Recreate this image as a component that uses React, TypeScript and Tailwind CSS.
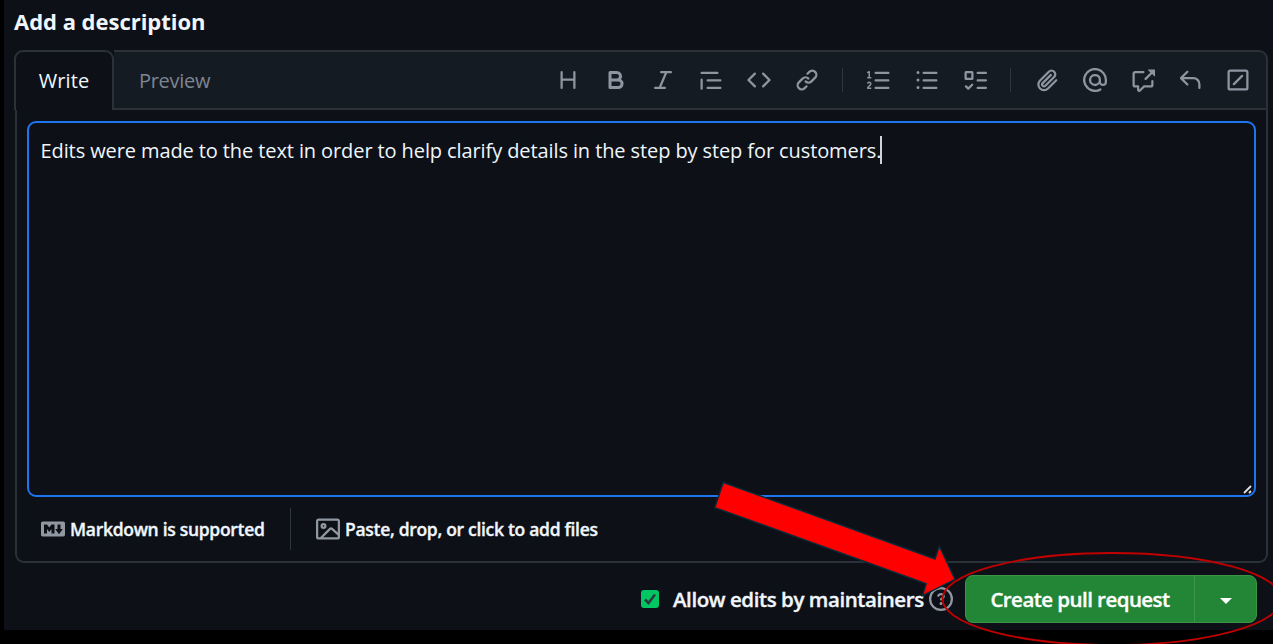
import React from "react";

const ICONS = {
  heading:
    "M3.75 2a.75.75 0 0 1 .75.75V7h7V2.75a.75.75 0 0 1 1.5 0v10.5a.75.75 0 0 1-1.5 0V8.5h-7v4.75a.75.75 0 0 1-1.5 0V2.75A.75.75 0 0 1 3.75 2Z",
  bold: "M4 2h4.5a3.501 3.501 0 0 1 2.852 5.53A3.499 3.499 0 0 1 9.5 14H4a1 1 0 0 1-1-1V3a1 1 0 0 1 1-1Zm1 7v3h4.5a1.5 1.5 0 0 0 0-3Zm3.5-2a1.5 1.5 0 0 0 0-3H5v3Z",
  italic:
    "M6 2.75A.75.75 0 0 1 6.75 2h6.5a.75.75 0 0 1 0 1.5h-2.505l-3.858 9H9.25a.75.75 0 0 1 0 1.5h-6.5a.75.75 0 0 1 0-1.5h2.505l3.858-9H6.75A.75.75 0 0 1 6 2.75Z",
  quote:
    "M1.75 2.5h10.5a.75.75 0 0 1 0 1.5H1.75a.75.75 0 0 1 0-1.5Zm4 5h8.5a.75.75 0 0 1 0 1.5h-8.5a.75.75 0 0 1 0-1.5Zm0 5h8.5a.75.75 0 0 1 0 1.5h-8.5a.75.75 0 0 1 0-1.5ZM2.5 7.75v6a.75.75 0 0 1-1.5 0v-6a.75.75 0 0 1 1.5 0Z",
  code: "m11.28 3.22 4.25 4.25a.75.75 0 0 1 0 1.06l-4.25 4.25a.749.749 0 0 1-1.275-.326.749.749 0 0 1 .215-.734L13.94 8l-3.72-3.72a.749.749 0 0 1 .326-1.275.749.749 0 0 1 .734.215Zm-6.56 0a.751.751 0 0 1 1.042.018.751.751 0 0 1 .018 1.042L2.06 8l3.72 3.72a.749.749 0 0 1-.326 1.275.749.749 0 0 1-.734-.215L.47 8.53a.75.75 0 0 1 0-1.06Z",
  link: "m7.775 3.275 1.25-1.25a3.5 3.5 0 1 1 4.95 4.95l-2.5 2.5a3.5 3.5 0 0 1-4.95 0 .751.751 0 0 1 .018-1.042.751.751 0 0 1 1.042-.018 1.998 1.998 0 0 0 2.83 0l2.5-2.5a2.002 2.002 0 0 0-2.83-2.83l-1.25 1.25a.751.751 0 0 1-1.042-.018.751.751 0 0 1-.018-1.042Zm-4.69 9.64a1.998 1.998 0 0 0 2.83 0l1.25-1.25a.751.751 0 0 1 1.042.018.751.751 0 0 1 .018 1.042l-1.25 1.25a3.5 3.5 0 1 1-4.95-4.95l2.5-2.5a3.5 3.5 0 0 1 4.95 0 .751.751 0 0 1-.018 1.042.751.751 0 0 1-1.042.018 1.998 1.998 0 0 0-2.83 0l-2.5 2.5a1.998 1.998 0 0 0 0 2.83Z",
  listOrdered:
    "M5 3.25a.75.75 0 0 1 .75-.75h8.5a.75.75 0 0 1 0 1.5h-8.5A.75.75 0 0 1 5 3.25Zm0 5a.75.75 0 0 1 .75-.75h8.5a.75.75 0 0 1 0 1.5h-8.5A.75.75 0 0 1 5 8.25Zm0 5a.75.75 0 0 1 .75-.75h8.5a.75.75 0 0 1 0 1.5h-8.5a.75.75 0 0 1-.75-.75ZM.924 10.32a.5.5 0 0 1-.851-.525l.001-.001.001-.002.002-.004.007-.011c.097-.144.215-.273.348-.384.228-.19.588-.392 1.068-.392.468 0 .858.181 1.126.484.259.294.377.673.377 1.038 0 .987-.686 1.495-1.156 1.845l-.047.035c-.303.225-.522.4-.654.597h1.357a.5.5 0 0 1 0 1H.5a.5.5 0 0 1-.5-.5c0-1.005.692-1.52 1.167-1.875l.035-.025c.531-.396.8-.625.8-1.078a.57.57 0 0 0-.128-.376C1.806 10.068 1.695 10 1.5 10a.658.658 0 0 0-.429.163.835.835 0 0 0-.144.153ZM2.003 2.5V6h.503a.5.5 0 0 1 0 1H.5a.5.5 0 0 1 0-1h.503V3.308l-.28.14a.5.5 0 0 1-.446-.895l1.003-.5a.5.5 0 0 1 .723.447Z",
  listUnordered:
    "M5.75 2.5h8.5a.75.75 0 0 1 0 1.5h-8.5a.75.75 0 0 1 0-1.5Zm0 5h8.5a.75.75 0 0 1 0 1.5h-8.5a.75.75 0 0 1 0-1.5Zm0 5h8.5a.75.75 0 0 1 0 1.5h-8.5a.75.75 0 0 1 0-1.5ZM2 14a1 1 0 1 1 0-2 1 1 0 0 1 0 2Zm1-6a1 1 0 1 1-2 0 1 1 0 0 1 2 0ZM2 4a1 1 0 1 1 0-2 1 1 0 0 1 0 2Z",
  tasklist:
    "M2 2h4a1 1 0 0 1 1 1v4a1 1 0 0 1-1 1H2a1 1 0 0 1-1-1V3a1 1 0 0 1 1-1Zm4.655 8.595a.75.75 0 0 1 0 1.06L4.03 14.28a.75.75 0 0 1-1.06 0l-1.5-1.5a.749.749 0 0 1 .326-1.275.749.749 0 0 1 .734.215l.97.97 2.095-2.095a.75.75 0 0 1 1.06 0ZM9.75 2.5h5.5a.75.75 0 0 1 0 1.5h-5.5a.75.75 0 0 1 0-1.5Zm0 5h5.5a.75.75 0 0 1 0 1.5h-5.5a.75.75 0 0 1 0-1.5Zm0 5h5.5a.75.75 0 0 1 0 1.5h-5.5a.75.75 0 0 1 0-1.5Zm-7.25-9v3h3v-3Z",
  paperclip:
    "M12.212 3.02a1.753 1.753 0 0 0-2.478.003l-5.83 5.83a3.007 3.007 0 0 0-.88 2.127c0 .795.315 1.551.88 2.116.567.567 1.333.89 2.126.89.79 0 1.548-.321 2.116-.89l5.48-5.48a.75.75 0 0 1 1.061 1.06l-5.48 5.48a4.492 4.492 0 0 1-3.177 1.33c-1.2 0-2.345-.487-3.187-1.33a4.483 4.483 0 0 1-1.32-3.177c0-1.195.475-2.341 1.32-3.186l5.83-5.83a3.25 3.25 0 0 1 5.553 2.297c0 .863-.343 1.691-.953 2.301L7.439 12.39c-.375.377-.884.59-1.416.593a1.998 1.998 0 0 1-1.412-.593 1.992 1.992 0 0 1 0-2.828l5.48-5.48a.751.751 0 0 1 1.042.018.751.751 0 0 1 .018 1.042l-5.48 5.48a.492.492 0 0 0 0 .707.499.499 0 0 0 .352.154.51.51 0 0 0 .356-.154l5.833-5.827a1.755 1.755 0 0 0 0-2.481Z",
  mention:
    "M4.75 2.37a6.501 6.501 0 0 0 6.5 11.26.75.75 0 0 1 .75 1.298A7.999 7.999 0 0 1 .989 4.148 8 8 0 0 1 16 7.75v1.5a2.75 2.75 0 0 1-5.072 1.475 3.999 3.999 0 0 1-6.65-4.19A4 4 0 0 1 12 8v1.25a1.25 1.25 0 0 0 2.5 0V7.867a6.5 6.5 0 0 0-9.75-5.496ZM10.5 8a2.5 2.5 0 1 0-5 0 2.5 2.5 0 0 0 5 0Z",
  crossReference:
    "M2.75 3.5a.25.25 0 0 0-.25.25v7.5c0 .138.112.25.25.25h2a.75.75 0 0 1 .75.75v2.19l2.72-2.72a.749.749 0 0 1 .53-.22h4.5a.25.25 0 0 0 .25-.25v-2.5a.75.75 0 0 1 1.5 0v2.5A1.75 1.75 0 0 1 13.25 13H9.06l-2.573 2.573A1.458 1.458 0 0 1 4 14.543V13H2.75A1.75 1.75 0 0 1 1 11.25v-7.5C1 2.784 1.784 2 2.75 2h5.5a.75.75 0 0 1 0 1.5ZM16 1.25v4.146a.25.25 0 0 1-.427.177L14.03 4.03l-3.75 3.75a.749.749 0 0 1-1.275-.326.749.749 0 0 1 .215-.734l3.75-3.75-1.543-1.543A.25.25 0 0 1 11.604 1h4.146a.25.25 0 0 1 .25.25Z",
  reply:
    "M6.78 1.97a.75.75 0 0 1 0 1.06L3.81 6h6.44A4.75 4.75 0 0 1 15 10.75v2.5a.75.75 0 0 1-1.5 0v-2.5a3.25 3.25 0 0 0-3.25-3.25H3.81l2.97 2.97a.749.749 0 0 1-.326 1.275.749.749 0 0 1-.734-.215L1.47 7.28a.75.75 0 0 1 0-1.06l4.25-4.25a.75.75 0 0 1 1.06 0Z",
  slash:
    "M13.25 1c.966 0 1.75.784 1.75 1.75v10.5A1.75 1.75 0 0 1 13.25 15H2.75A1.75 1.75 0 0 1 1 13.25V2.75C1 1.784 1.784 1 2.75 1ZM2.75 2.5a.25.25 0 0 0-.25.25v10.5c0 .138.112.25.25.25h10.5a.25.25 0 0 0 .25-.25V2.75a.25.25 0 0 0-.25-.25Zm8.53 3.28-5.5 5.5a.749.749 0 0 1-1.275-.326.749.749 0 0 1 .215-.734l5.5-5.5a.751.751 0 0 1 1.042.018.751.751 0 0 1 .018 1.042Z",
  markdown:
    "M14.85 3c.63 0 1.15.52 1.14 1.15v7.7c0 .63-.51 1.15-1.15 1.15H1.15C.52 13 0 12.48 0 11.84V4.15C0 3.52.52 3 1.15 3ZM9 11V5H7L5.5 7 4 5H2v6h2V8l1.5 1.92L7 8v3Zm2.99.5L14.5 8H13V5h-2v3H9.5Z",
  image:
    "M16 13.25A1.75 1.75 0 0 1 14.25 15H1.75A1.75 1.75 0 0 1 0 13.25V2.75C0 1.784.784 1 1.75 1h12.5c.966 0 1.75.784 1.75 1.75ZM1.75 2.5a.25.25 0 0 0-.25.25v10.5c0 .138.112.25.25.25h.94l.03-.03 6.077-6.078a1.75 1.75 0 0 1 2.412-.06L14.5 10.31V2.75a.25.25 0 0 0-.25-.25Zm12.5 11a.25.25 0 0 0 .25-.25v-.917l-4.298-3.889a.25.25 0 0 0-.344.009L4.81 13.5ZM7 6a2 2 0 1 1-3.999.001A2 2 0 0 1 7 6ZM5.5 6a.5.5 0 1 0-1 0 .5.5 0 0 0 1 0Z",
  question:
    "M0 8a8 8 0 1 1 16 0A8 8 0 0 1 0 8Zm8-6.5a6.5 6.5 0 1 0 0 13 6.5 6.5 0 0 0 0-13ZM6.92 6.085h.001a.749.749 0 1 1-1.342-.67c.169-.339.436-.701.849-.977C6.845 4.16 7.369 4 8 4a2.756 2.756 0 0 1 1.637.525c.503.377.863.965.863 1.725 0 .448-.115.83-.329 1.15-.205.307-.47.513-.692.662-.109.072-.22.138-.313.195l-.006.004a6.24 6.24 0 0 0-.26.16.952.952 0 0 0-.276.245.75.75 0 0 1-1.248-.832c.184-.264.42-.489.692-.661.103-.067.207-.132.313-.195l.007-.004c.1-.061.182-.11.258-.161a.969.969 0 0 0 .277-.245C8.96 6.514 9 6.427 9 6.25a.612.612 0 0 0-.262-.525A1.27 1.27 0 0 0 8 5.5c-.369 0-.595.09-.74.187a1.01 1.01 0 0 0-.34.398ZM9 11a1 1 0 1 1-2 0 1 1 0 0 1 2 0Z",
};

type IconName = keyof typeof ICONS;

function Icon({ name, className = "size-6" }: { name: IconName; className?: string }) {
  return (
    <svg viewBox="0 0 16 16" fill="currentColor" className={`shrink-0 ${className}`} aria-hidden="true">
      <path d={ICONS[name]} />
    </svg>
  );
}

const GROUPS: IconName[][] = [
  ["heading", "bold", "italic", "quote", "code", "link"],
  ["listOrdered", "listUnordered", "tasklist"],
  ["paperclip", "mention", "crossReference", "reply", "slash"],
];

function Toolbar() {
  return (
    <div className="flex h-full items-center pr-[4px] text-[#8d96a0]">
      {GROUPS.map((group, i) => (
        <React.Fragment key={i}>
          {i > 0 && (
            <div className="flex w-[24.5px] justify-center">
              <div className="h-6 w-px bg-[#30363d]" />
            </div>
          )}
          {group.map((name) => (
            <button key={name} className="flex h-10 w-[47.8px] items-center justify-center">
              <Icon name={name} />
            </button>
          ))}
        </React.Fragment>
      ))}
    </div>
  );
}

function Annotations() {
  return (
    <svg
      className="pointer-events-none absolute inset-0 h-[644px] w-[1273px]"
      viewBox="0 0 1273 644"
      aria-hidden="true"
    >
      <path
        d="M723.3 482.5 935 559 939.3 546.3 955 579.5 922.5 595.6 926.2 583.8 714.8 507.6Z"
        fill="#ff0000"
        stroke="#0b2a38"
        strokeWidth="1.4"
      />
      <ellipse cx="1112" cy="599" rx="169.5" ry="46" fill="none" stroke="#c00000" strokeWidth="1.8" />
    </svg>
  );
}

export default function App() {
  return (
    <div className="relative h-[644px] w-[1273px] overflow-hidden bg-black pl-1 font-['Open_Sans','Noto_Sans',sans-serif] text-[#f0f6fc]">
      <main className="flex h-[630px] flex-col bg-[#0d1117] pl-[10px] pr-[5px]">
        <h2 className="h-[50px] pt-[6px] text-[22px] leading-[30px] font-bold tracking-[-0.02px] whitespace-nowrap">
          Add a description
        </h2>

        <section className="flex h-[513px] flex-col">
          <div className="flex h-[60px] shrink-0">
            <button className="h-[60px] w-[100px] shrink-0 rounded-t-[9px] border-2 border-b-0 border-[#2b3138] text-[20px] tracking-[0.1px]">
              Write
            </button>
            <div className="-ml-[9px] flex h-[60px] grow items-center justify-between rounded-tr-[9px] border-y-2 border-r-2 border-[#2b3138] bg-[#151b23] [clip-path:polygon(9px_0,100%_0,100%_100%,9px_100%)]">
              <button className="pt-[2px] pl-[34px] text-[20px] tracking-[-0.3px] text-[#7d8590]">Preview</button>
              <Toolbar />
            </div>
          </div>

          <div className="ml-px flex grow flex-col rounded-b-[9px] border-x-2 border-b-2 border-[#2b3138] px-[10px] pt-[11px]">
            <div className="relative h-[376px] rounded-[9px] border-2 border-[#1f74f0] pt-[13px] pl-[11.5px]">
              <p className="flex h-7 items-center text-[20px] tracking-[-0.1px] whitespace-nowrap">
                <span className="pt-px">
                  Edits were made to the text in order to help clarify details in the step by step for customers.
                </span>
                <span className="-ml-px h-7 w-[1.5px] bg-[#d0d4d8]" />
              </p>
              <svg className="absolute right-0 bottom-0 size-[12px]" viewBox="0 0 12 12" aria-hidden="true">
                <path d="M2 10 9 3M7 10l2-2" stroke="#e0e0e0" strokeWidth="1.8" />
              </svg>
            </div>
            <div className="flex grow items-center pl-[14px] text-[17.5px] font-semibold tracking-[-0.3px] whitespace-nowrap [-webkit-text-stroke:0.35px]">
              <Icon name="markdown" className="size-6 text-[#9198a1]" />
              <span className="ml-[5px] w-[220px]">Markdown is supported</span>
              <span className="h-[42px] w-px bg-[#30363d]" />
              <Icon name="image" className="ml-[25px] size-6 text-[#9198a1]" />
              <span className="ml-[5px]">Paste, drop, or click to add files</span>
            </div>
          </div>
        </section>

        <div className="mt-[12px] flex h-[48px] items-center justify-end pr-[11px]">
          <span className="flex size-[18px] items-center justify-center rounded-[3px] bg-[#00c764]">
            <svg viewBox="0 0 18 18" className="size-[18px]" fill="none" aria-hidden="true">
              <path d="m4 9.5 3.5 3.5L14 4.5" stroke="#2e3b3a" strokeWidth="2.6" />
            </svg>
          </span>
          <span className="ml-[14px] w-[256px] pt-px text-[20.5px] font-semibold tracking-[-0.43px] whitespace-nowrap [-webkit-text-stroke:0.35px]">
            Allow edits by maintainers
          </span>
          <Icon name="question" className="size-6 text-[#9198a1]" />
          <div className="ml-[12px] flex h-[48px] w-[292px] rounded-[8px] border border-[#3c9449] bg-[#238636] text-white">
            <button className="flex w-[229px] items-center justify-center border-r border-[#3c9449] text-[20.5px] font-semibold tracking-[-0.55px] whitespace-nowrap [-webkit-text-stroke:0.35px]">
              Create pull request
            </button>
            <button className="flex grow items-center justify-center" aria-label="More options">
              <svg viewBox="0 0 12 6" className="mt-[4px] h-[6px] w-[12px]" fill="currentColor" aria-hidden="true">
                <path d="M0 0h12L6 6Z" />
              </svg>
            </button>
          </div>
        </div>
      </main>
      <Annotations />
    </div>
  );
}
